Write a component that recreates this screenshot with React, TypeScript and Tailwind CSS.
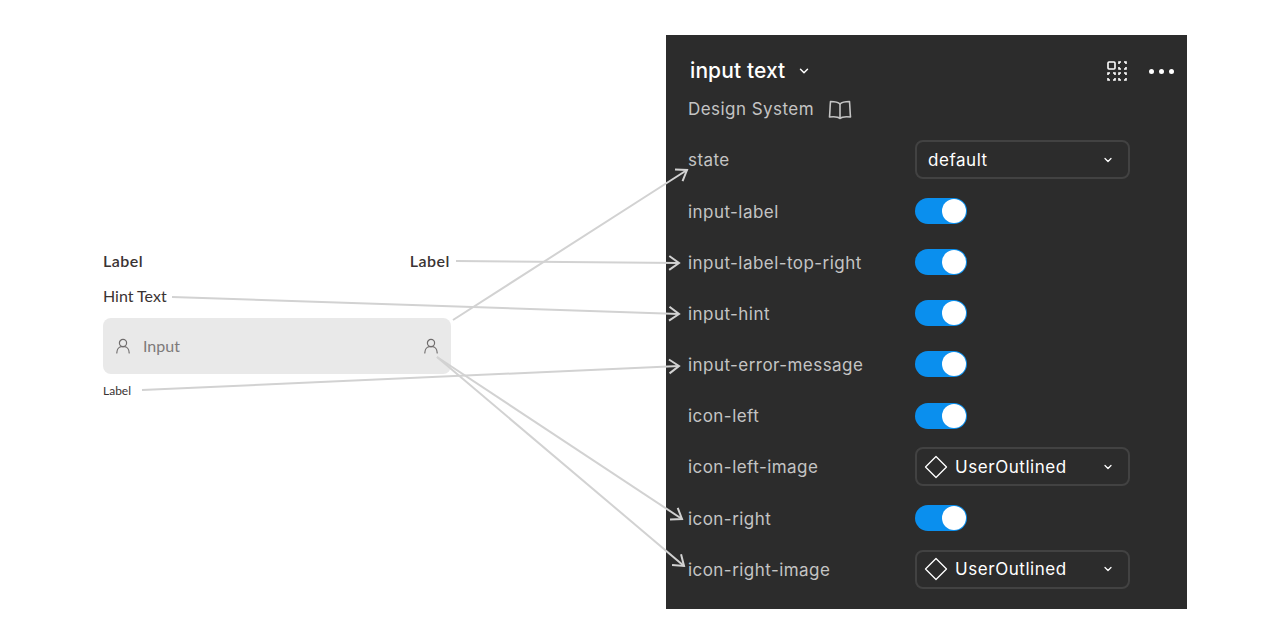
import { ChevronDown } from 'lucide-react';

const arrows = [
  { x1: 453, y1: 320, x2: 687, y2: 170 },
  { x1: 456, y1: 261, x2: 679, y2: 263 },
  { x1: 172, y1: 297, x2: 679, y2: 314 },
  { x1: 142, y1: 390, x2: 679, y2: 366 },
  { x1: 437, y1: 357, x2: 682, y2: 519 },
  { x1: 437, y1: 357, x2: 684, y2: 566 },
];

const Arrow = ({ x1, y1, x2, y2 }: { x1: number; y1: number; x2: number; y2: number }) => {
  const angle = Math.atan2(y2 - y1, x2 - x1);
  const len = 12;
  const spread = 0.62;
  const ax = x2 - len * Math.cos(angle - spread);
  const ay = y2 - len * Math.sin(angle - spread);
  const bx = x2 - len * Math.cos(angle + spread);
  const by = y2 - len * Math.sin(angle + spread);
  return (
    <g>
      <line x1={x1} y1={y1} x2={x2} y2={y2} />
      <polyline points={`${ax},${ay} ${x2},${y2} ${bx},${by}`} />
    </g>
  );
};

const UserIcon = () => (
  <svg width="16" height="16" viewBox="0 0 16 16" fill="none" stroke="#6f6c6c" strokeWidth="1.2">
    <circle cx="8" cy="5" r="3.6" />
    <path d="M1.8 15c0-3.6 2.2-6 4.4-6.3h3.6c2.2.3 4.4 2.7 4.4 6.3" strokeLinecap="round" />
  </svg>
);

const Toggle = () => (
  <div className="w-[52px] h-[26px] rounded-full bg-[#0a8fee] flex items-center justify-end pr-[1px]">
    <div className="w-[24px] h-[24px] rounded-full bg-white" />
  </div>
);

const Diamond = () => (
  <svg width="24" height="24" viewBox="0 0 24 24" fill="none" stroke="#fff" strokeWidth="1.3">
    <path d="M12 1.5 22.5 12 12 22.5 1.5 12Z" strokeLinejoin="round" />
  </svg>
);

const Select = ({ value, icon }: { value: string; icon?: boolean }) => (
  <div className={icon
    ? 'w-[215px] h-[39px] rounded-[8px] border-2 border-[#424242] flex items-center pl-[7px] pr-[14px] text-[17px] tracking-[0.55px] text-white'
    : 'w-[215px] h-[39px] rounded-[8px] border-2 border-[#424242] flex items-center pl-[11px] pr-[14px] text-[17px] tracking-[0.55px] text-white'}>
    {icon && (
      <span className="mr-[7px] flex">
        <Diamond />
      </span>
    )}
    <span className="flex-1 pt-[2px]">{value}</span>
    <ChevronDown size={12} strokeWidth={2.5} />
  </div>
);

const Row = ({ label, children }: { label: string; children: React.ReactNode }) => (
  <div className="h-[51.2px] flex items-center">
    <span className="w-[227px] pt-[3px] text-[17px] tracking-[0.45px] text-[#c4c4c4]">{label}</span>
    {children}
  </div>
);

// the component-set glyph: one solid square, three made of corners only
const CornerSquare = ({ x, y }: { x: number; y: number }) => (
  <path d={`M${x} ${y + 2}V${y}H${x + 2}M${x + 5} ${y}H${x + 7}V${y + 2}M${x + 7} ${y + 5}V${y + 7}H${x + 5}M${x + 2} ${y + 7}H${x}V${y + 5}`} />
);

export default function App() {
  return (
    <div className="relative w-[1280px] h-[643px] bg-white overflow-hidden flex items-start">
      <div className="w-[666px] pl-[103px] pr-[215px] pt-[251px] font-['Lato',sans-serif] text-[#3a3333]">
        <div className="flex justify-between text-[16px] font-semibold tracking-[0.5px] leading-[20px]">
          <span>Label</span>
          <span className="mr-[1px]">Label</span>
        </div>
        <div className="mt-[15px] text-[16px] leading-[20px]">Hint Text</div>
        <div className="mt-[12px] h-[56px] rounded-[8px] bg-[#e9e9e9] flex items-center px-[12px]">
          <UserIcon />
          <span className="ml-[12px] flex-1 text-[16px] text-[#7d7a7a]">Input</span>
          <UserIcon />
        </div>
        <div className="mt-[10px] text-[12px] leading-[14px]">Label</div>
      </div>

      <div className="mt-[35px] w-[521px] h-[574px] bg-[#2c2c2c] font-['Inter',sans-serif] pl-[22px] pr-[13px]">
        <div className="h-[48px] mt-[12px] flex items-center">
          <span className="ml-[2px] text-[21px] font-medium tracking-[0.1px] text-white">input text</span>
          <ChevronDown size={14} strokeWidth={2.5} className="ml-[12px] text-white" />
          <div className="ml-auto flex items-center">
            <svg width="20" height="20" viewBox="0 0 20 20" fill="none" stroke="#fff" strokeWidth="1.6">
              <rect x="1" y="1" width="7" height="7" rx="1" />
              <CornerSquare x={12} y={1} />
              <CornerSquare x={1} y={12} />
              <CornerSquare x={12} y={12} />
            </svg>
            <div className="ml-[22px] flex gap-[5px]">
              <div className="w-[5px] h-[5px] rounded-full bg-white" />
              <div className="w-[5px] h-[5px] rounded-full bg-white" />
              <div className="w-[5px] h-[5px] rounded-full bg-white" />
            </div>
          </div>
        </div>
        <div className="h-[30px] flex items-center text-[17px] tracking-[0.45px] text-[#c4c4c4]">
          <span>Design System</span>
          <svg className="ml-[14px] mb-[1px]" width="24" height="20" viewBox="0 0 24 20" fill="none" stroke="#c4c4c4" strokeWidth="1.6" strokeLinejoin="round">
            <path d="M12 4C10 2 6 1.500 2.500 1.500 2 7 2 12 1.500 17 6 16.500 10 16.500 12 18.500 14 16.500 18 16.500 22.500 17 22 12 22 7 21.500 1.500 18 1.500 14 2 12 4Z" />
            <path d="M12 4v14.500" />
          </svg>
        </div>
        <div className="mt-[9px]">
          <Row label="state">
            <Select value="default" />
          </Row>
          <Row label="input-label"><Toggle /></Row>
          <Row label="input-label-top-right"><Toggle /></Row>
          <Row label="input-hint"><Toggle /></Row>
          <Row label="input-error-message"><Toggle /></Row>
          <Row label="icon-left"><Toggle /></Row>
          <Row label="icon-left-image">
            <Select value="UserOutlined" icon />
          </Row>
          <Row label="icon-right"><Toggle /></Row>
          <Row label="icon-right-image">
            <Select value="UserOutlined" icon />
          </Row>
        </div>
      </div>

      {/* annotation arrows */}
      <svg className="absolute inset-0 pointer-events-none" width="1280" height="643" fill="none" stroke="#d2d2d2" strokeWidth="2">
        {arrows.map((a, i) => (
          <Arrow key={i} {...a} />
        ))}
      </svg>
    </div>
  );
}
